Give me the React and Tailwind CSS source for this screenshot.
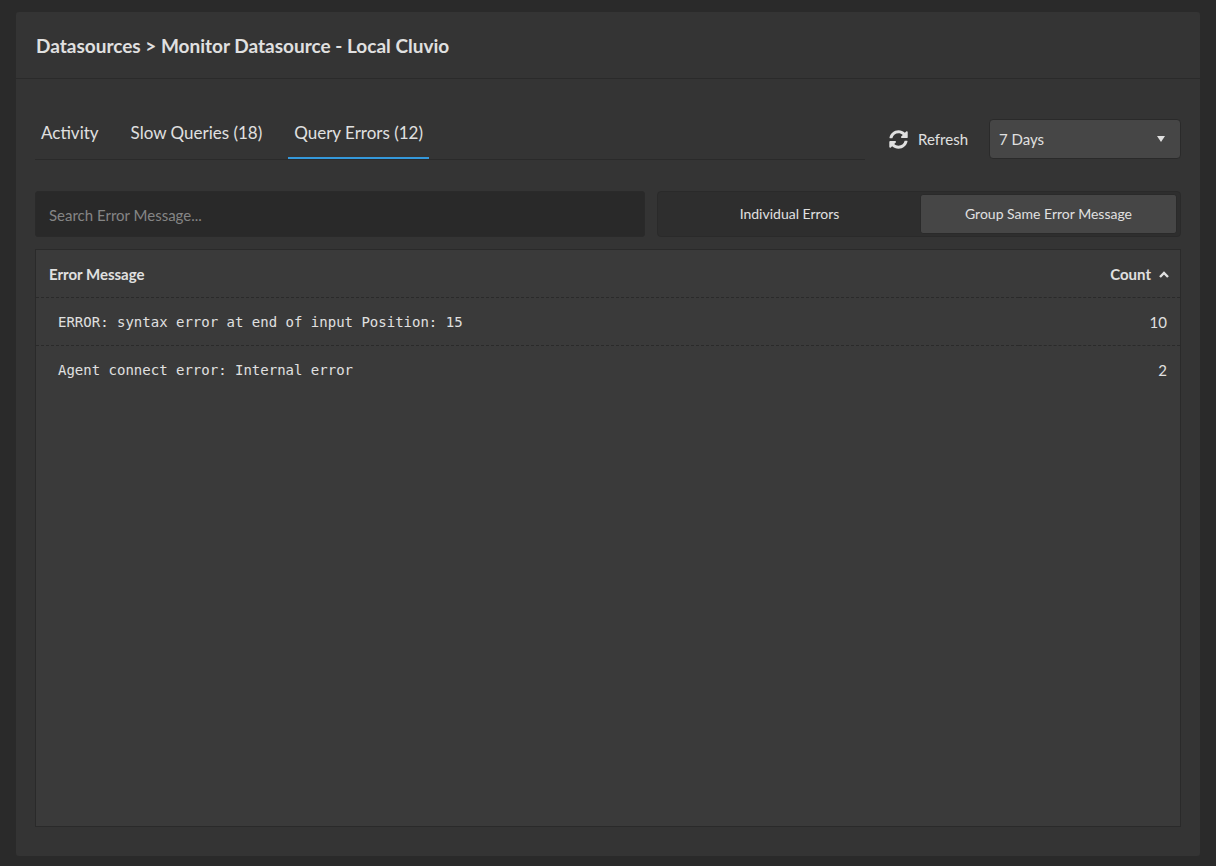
import React, { useState } from 'react';
import { FaSyncAlt } from 'react-icons/fa';

const tabs = [
  { id: 'activity', label: 'Activity' },
  { id: 'slow', label: 'Slow Queries (18)' },
  { id: 'errors', label: 'Query Errors (12)' },
];

const errors = [
  { message: 'ERROR: syntax error at end of input Position: 15', count: 10 },
  { message: 'Agent connect error: Internal error', count: 2 },
];

function Tabs({ active, onChange }) {
  return (
    <div role="tablist" className="flex flex-1 gap-5 border-b border-[#2a2a2a] pt-0.5">
      {tabs.map((tab) => (
        <button
          key={tab.id}
          role="tab"
          aria-selected={active === tab.id}
          onClick={() => onChange(tab.id)}
          className={`border-b-2 px-1.5 pb-3 text-[17px] leading-6 ${
            active === tab.id ? 'border-[#3498db]' : 'border-transparent'
          }`}
        >
          {tab.label}
        </button>
      ))}
    </div>
  );
}

function Toggle({ grouped, onChange }) {
  const base = 'flex-1 rounded-[3px] border text-sm';
  const on = 'border-[#2a2a2a] bg-[#464646]';
  const off = 'border-transparent';

  return (
    <div className="flex gap-0.5 rounded border border-[#2a2a2a] bg-[#2e2e2e] px-[3px] py-0.5">
      <button onClick={() => onChange(false)} className={`${base} ${grouped ? off : on}`}>
        Individual Errors
      </button>
      <button onClick={() => onChange(true)} className={`${base} ${grouped ? on : off}`}>
        Group Same Error Message
      </button>
    </div>
  );
}

function ErrorTable({ rows }) {
  const line = 'border-b border-dashed border-[#2a2a2a]';
  const noLine = 'border-b border-transparent';

  return (
    <div className="flex-1 border border-[#2a2a2a] bg-[#3a3a3a]">
      <table className="w-full border-separate border-spacing-0 text-[15px]">
        <thead>
          <tr className="h-12">
            <th className={`pt-0.5 pl-[13px] text-left font-bold ${line}`}>Error Message</th>
            <th className={`pt-0.5 pr-[11px] font-bold ${line}`}>
              <button className="ml-auto flex items-center gap-2">
                Count
                <svg viewBox="0 0 10 7" className="h-[7px] w-2.5 fill-none stroke-current stroke-[2.4]">
                  <path d="M1 6L5 2l4 4" />
                </svg>
              </button>
            </th>
          </tr>
        </thead>
        <tbody>
          {rows.map((row, i) => (
            <tr key={row.message} className="h-12">
              <td className={`pl-[22px] font-['DejaVu_Sans_Mono',monospace] text-sm ${i < rows.length - 1 ? line : noLine}`}>
                {row.message}
              </td>
              <td className={`pt-0.5 pr-[13px] text-right ${i < rows.length - 1 ? line : noLine}`}>{row.count}</td>
            </tr>
          ))}
        </tbody>
      </table>
    </div>
  );
}

function App() {
  const [tab, setTab] = useState('errors');
  const [grouped, setGrouped] = useState(true);
  const [search, setSearch] = useState('');

  const rows = errors.filter((e) => e.message.toLowerCase().includes(search.toLowerCase()));

  return (
    <div className="flex min-h-screen flex-col bg-[#2a2a2a] px-4 pt-3 pb-2.5 font-['Lato',sans-serif] text-[#e0e0e0]">
      <main className="flex flex-1 flex-col rounded-[3px] bg-[#343434]">
        <header className="border-b border-[#2a2a2a] px-5 pt-[21px] pb-[19px]">
          <h1 className="text-[19px] leading-[26px] font-bold">Datasources &gt; Monitor Datasource - Local Cluvio</h1>
        </header>

        <div className="flex flex-1 flex-col px-[19px] pt-10 pb-[29px]">
          {/* Tabs and time range */}
          <div className="flex">
            <Tabs active={tab} onChange={setTab} />
            <button className="ml-6 flex h-10 items-center gap-2.5 text-[15px]">
              <FaSyncAlt className="size-[19px]" />
              Refresh
            </button>
            <div className="relative ml-[21px] h-10 w-48">
              <select
                aria-label="Time range"
                className="h-full w-full appearance-none rounded border border-[#2a2a2a] bg-[#464646] px-[9px] text-[15px] outline-none"
              >
                <option>7 Days</option>
                <option>30 Days</option>
              </select>
              <svg viewBox="0 0 8 6" className="pointer-events-none absolute top-[17px] right-4 h-1.5 w-2 fill-current">
                <path d="M0 0h8L4 6z" />
              </svg>
            </div>
          </div>

          {/* Search and grouping */}
          <div className="mt-[31px] mb-3 grid h-[46px] grid-cols-[610fr_524fr] gap-3">
            <input
              type="text"
              aria-label="Search error message"
              placeholder="Search Error Message..."
              value={search}
              onChange={(e) => setSearch(e.target.value)}
              className="min-w-0 rounded-[3px] border border-[#2a2a2a] bg-[#292929] px-[13px] pt-0.5 text-[15px] outline-none placeholder:text-[#858585]"
            />
            <Toggle grouped={grouped} onChange={setGrouped} />
          </div>

          <ErrorTable rows={rows} />
        </div>
      </main>
    </div>
  );
}

export default App;
